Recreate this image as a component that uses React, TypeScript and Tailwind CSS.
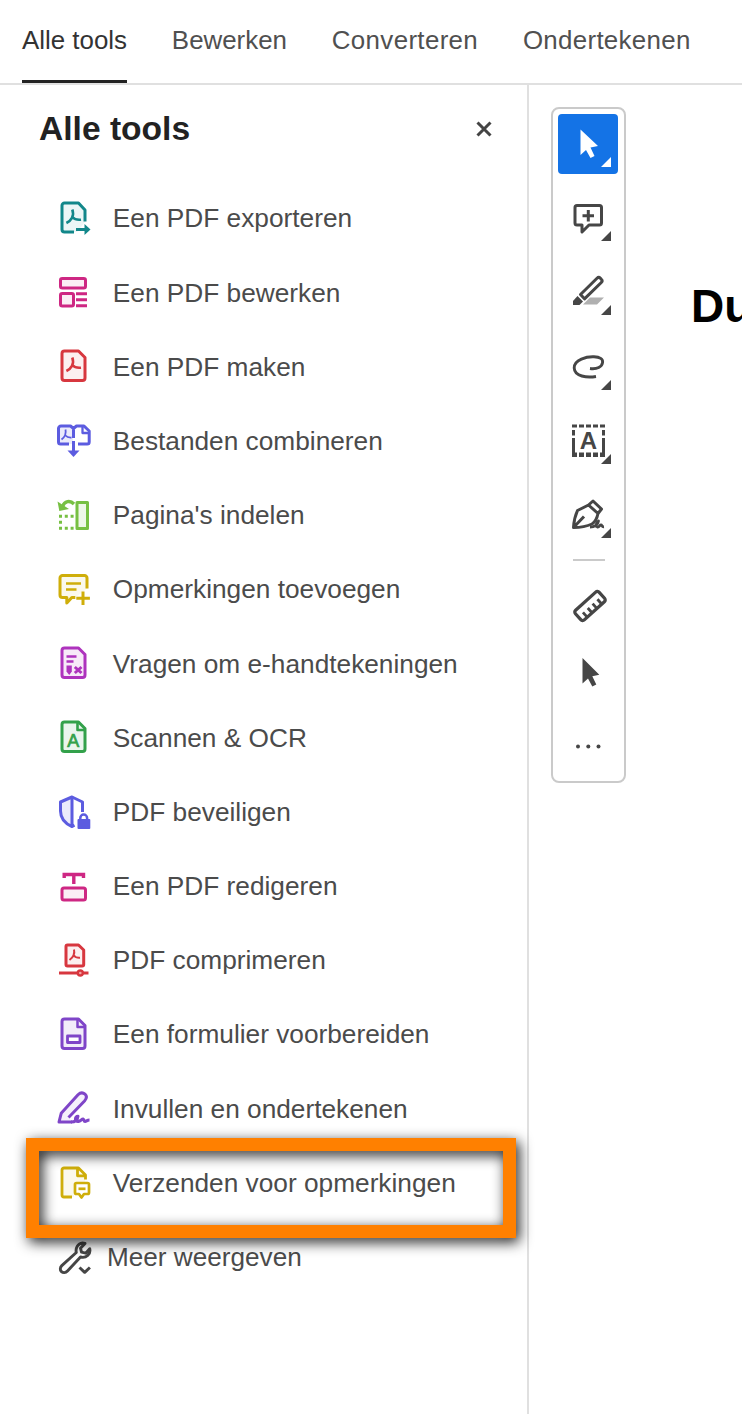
import { useState } from "react";
import type { ReactNode } from "react";

const tabs = [
  { label: "Alle tools", tracking: "tracking-normal" },
  { label: "Bewerken", tracking: "tracking-normal" },
  { label: "Converteren", tracking: "tracking-[0.35px]" },
  { label: "Ondertekenen", tracking: "tracking-[0.3px]" },
];

const DOC = "M8.500 3h14l6.500 6.500V30a2.500 2.500 0 0 1-2.500 2.500h-18A2.500 2.500 0 0 1 6 30V5.500A2.500 2.500 0 0 1 8.500 3z";
const ACROBAT = "M16.300 9.500c1.300 3.500.9 6-.3 8.300-1.200 2.200-2.900 3.900-5.600 5.200M16.300 17c2 2.200 4.700 3.200 8.700 2.700";
const TRIANGLE = "M53 43v10H43z";

function ToolIcon({ color, children }: { color: string; children: ReactNode }) {
  return (
    <svg className={`block h-9 w-9 shrink-0 ${color}`} viewBox="0 0 36 36" fill="none" stroke="currentColor" strokeWidth={3} strokeLinejoin="round">
      {children}
    </svg>
  );
}

const tools: { label: string; icon: ReactNode }[] = [
  {
    label: "Een PDF exporteren",
    icon: (
      <ToolIcon color="text-[#12878a]">
        <path d="M6 3h17l6 7v12l-8 10H6z" fill="currentColor" fillOpacity={0.08} stroke="none" />
        <path d="M29 21.500V10l-6.500-7h-14A2.500 2.500 0 0 0 6 5.500v24A2.500 2.500 0 0 0 8.500 32h9.500" />
        <path d={ACROBAT} strokeWidth={2.600} />
        <path d="M20 29.500h11" />
        <path d="M28.500 24v11l6-5.500z" fill="currentColor" stroke="none" />
      </ToolIcon>
    ),
  },
  {
    label: "Een PDF bewerken",
    icon: (
      <ToolIcon color="text-[#ce2783]">
        <g fill="currentColor" fillOpacity={0.08}>
          <rect x="4.500" y="4.500" width="25" height="9.500" rx="1.800" />
          <rect x="4.500" y="19.500" width="13" height="12.500" rx="1.800" />
        </g>
        <path d="M20 19.700h11M20 25.700h11M20 31.700h11" />
      </ToolIcon>
    ),
  },
  {
    label: "Een PDF maken",
    icon: (
      <ToolIcon color="text-[#d7373f]">
        <path d={DOC} fill="currentColor" fillOpacity={0.08} />
        <path d={ACROBAT} strokeWidth={2.600} />
      </ToolIcon>
    ),
  },
  {
    label: "Bestanden combineren",
    icon: (
      <ToolIcon color="text-[#5c5ce0]">
        <path d="M3 4h14v17H3z" fill="currentColor" fillOpacity={0.12} stroke="none" />
        <path d="M13 21h-8.500a2 2 0 0 1-2-2V5.500a2.500 2.500 0 0 1 2.500-2.500h9.500l3 2.500 3-2.500H28l5.200 5v11a2 2 0 0 1-2 2H22M17.500 5v10" />
        <path d="M26.500 3.500V10h6.500" strokeWidth={2.300} />
        <path d="M9.500 6.500c.8 4-.5 7.500-4 10M9.500 12.500c1.500 1.800 3 2.200 6 2" strokeWidth={1.800} />
        <path d="M17.500 18v11" />
        <path d="M11.500 27.500h12l-6 6.500z" fill="currentColor" stroke="none" />
      </ToolIcon>
    ),
  },
  {
    label: "Pagina's indelen",
    icon: (
      <ToolIcon color="text-[#77c043]">
        <rect x="21" y="5.500" width="10.500" height="26" fill="currentColor" fillOpacity={0.12} />
        <path d="M18 7C14 3 8.500 4 6.500 9.500" strokeWidth={3.400} />
        <path d="M1.500 4.500 3.300 14l9.700-2z" fill="currentColor" stroke="none" />
        <path d="M3 19.300h16M3 25.300h3M3 31.300h16" strokeDasharray="3 2.800" />
      </ToolIcon>
    ),
  },
  {
    label: "Opmerkingen toevoegen",
    icon: (
      <ToolIcon color="text-[#cfae0a]">
        <path d="M31 17.500V7a2.500 2.500 0 0 0-2.500-2.500h-22A2.500 2.500 0 0 0 4 7v17a2.500 2.500 0 0 0 2.500 2.500h4.300V32l5-5.500h3.500" fill="currentColor" fillOpacity={0.08} />
        <path d="M10 12.500h15M10 18.500h10.500" strokeWidth={2.500} />
        <path d="M27 20.500V34M20.300 27.300h13.600" />
      </ToolIcon>
    ),
  },
  {
    label: "Vragen om e-handtekeningen",
    icon: (
      <ToolIcon color="text-[#ae33bd]">
        <path d={DOC} fill="currentColor" fillOpacity={0.1} />
        <path d="M10.500 11.500h10M10.500 16.500h7" strokeWidth={2.500} />
        <path d="M10.500 20.500h5.300v6l-2.600 3.500-2.700-3.500z" fill="currentColor" stroke="none" />
        <path d="m18.800 22 6.700 6M25.500 22l-6.700 6" strokeWidth={3} />
      </ToolIcon>
    ),
  },
  {
    label: "Scannen & OCR",
    icon: (
      <ToolIcon color="text-[#33a14b]">
        <path d={DOC} fill="currentColor" fillOpacity={0.1} />
        <path d="M21.500 3v8H29" strokeWidth={2.600} />
        <text x="17.300" y="27.800" textAnchor="middle" fontFamily="Liberation Sans, sans-serif" fontSize="18" fill="currentColor" strokeWidth="0.700">A</text>
      </ToolIcon>
    ),
  },
  {
    label: "PDF beveiligen",
    icon: (
      <ToolIcon color="text-[#5c5ce0]">
        <path d="M16 3 4.500 8v9c0 7 4.500 12.500 11.500 15.500z" fill="currentColor" fillOpacity={0.12} />
        <path d="M26.500 18V8L16 3M16 32.500l2.500-1.300" />
        <path d="M24.300 26v-2a3.400 3.400 0 0 1 6.800 0v2" strokeWidth={2.500} />
        <rect x="21.500" y="25" width="12.800" height="10" rx="1" fill="currentColor" stroke="none" />
      </ToolIcon>
    ),
  },
  {
    label: "Een PDF redigeren",
    icon: (
      <ToolIcon color="text-[#ce2783]">
        <path d="M8.200 10V6.500h19.300V10M17.800 6.500V16" strokeWidth={3.400} strokeLinejoin="miter" />
        <rect x="6" y="20" width="23.500" height="12" rx="2" fill="currentColor" fillOpacity={0.08} />
      </ToolIcon>
    ),
  },
  {
    label: "PDF comprimeren",
    icon: (
      <ToolIcon color="text-[#d7373f]">
        <path d="M11.500 3h11l5.200 5v14.500a1.500 1.500 0 0 1-1.500 1.500H11.500a1.500 1.500 0 0 1-1.500-1.500v-18A1.500 1.500 0 0 1 11.500 3z" fill="currentColor" fillOpacity={0.08} />
        <path d="M18 7.500c1 4.500-1 8-4.500 10.500M18 13.500c1.300 2 3 2.500 6 2.300" strokeWidth={2} />
        <path d="M3 31h29.500" />
        <circle cx="24.300" cy="31" r="2.500" fill="#f4a3a6" strokeWidth={2.400} />
      </ToolIcon>
    ),
  },
  {
    label: "Een formulier voorbereiden",
    icon: (
      <ToolIcon color="text-[#7f45c8]">
        <path d={DOC} fill="currentColor" fillOpacity={0.1} />
        <path d="M21.500 3v8H29" strokeWidth={2.500} />
        <rect x="11.500" y="20" width="12.500" height="6.500" fill="#fff" strokeWidth={2.800} />
      </ToolIcon>
    ),
  },
  {
    label: "Invullen en ondertekenen",
    icon: (
      <ToolIcon color="text-[#7f45c8]">
        <path d="M16 32H3l2.200-8.700L22 4.800c2.500-2.500 5-2.400 7-.6s1.800 4.200-.5 6.800L12.500 27.500" fill="currentColor" fillOpacity={0.08} />
        <path d="M15 32c4 0 6.500-2 7-5.800-3-.2-4 5.800.5 5.300 2.800-.5 3-2.500 4.500-2.500 1.500.5.5 2.500 2 2.500 1.500-.1 2-1.500 4.500-1.500" strokeWidth={3} />
      </ToolIcon>
    ),
  },
  {
    label: "Verzenden voor opmerkingen",
    icon: (
      <ToolIcon color="text-[#cfae0a]">
        <path d="M6 3h16l7 7v8H18v14H6z" fill="currentColor" fillOpacity={0.08} stroke="none" />
        <path d="M29.500 14.500V10l-7-7H8a2 2 0 0 0-2 2v25a2 2 0 0 0 2 2h8M21.500 3.500v7.300h7" strokeWidth={2.800} />
        <path d="M20.500 18h11a1.500 1.500 0 0 1 1.500 1.500v8a1.500 1.500 0 0 1-1.500 1.500H28l-2.500 3.500L23 29h-2.500a1.500 1.500 0 0 1-1.500-1.500v-8a1.500 1.500 0 0 1 1.500-1.500z" fill="#fff" strokeWidth={2.700} />
        <path d="M22.500 23.800h7" strokeWidth={2.700} />
      </ToolIcon>
    ),
  },
];

function TopBar({ active, onSelect }: { active: string; onSelect: (tab: string) => void }) {
  return (
    <header className="flex h-[85px] shrink-0 gap-[44.800px] border-b-2 border-[#e0e0e0] pl-[22px]">
      {tabs.map(({ label, tracking }) => (
        <button
          key={label}
          type="button"
          onClick={() => onSelect(label)}
          className={`h-[83px] whitespace-nowrap border-b-[3px] text-[25.900px] leading-[81px] ${tracking} ${
            label === active ? "border-[#222] text-[#333]" : "border-transparent text-[#505050]"
          }`}
        >
          {label}
        </button>
      ))}
    </header>
  );
}

function ToolsPanel() {
  return (
    <aside className="w-[529px] shrink-0 border-r-2 border-[#e0e0e0]">
      <div className="flex h-[88px] items-center justify-between pr-[35px] pl-[39px]">
        <h2 className="text-[33.600px] font-bold text-[#222]">Alle tools</h2>
        <svg className="h-[16px] w-[16px] text-[#444]" viewBox="0 0 16 16" fill="none" stroke="currentColor" strokeWidth={3}>
          <path d="m1.500 1.500 13 13m0-13-13 13" />
        </svg>
      </div>
      <ul className="pt-[8px]">
        {tools.map((tool, i) => (
          <li key={tool.label} className="relative flex h-[74.200px] items-center gap-[20.800px] pl-14">
            {tool.icon}
            <span className="pt-[2px] text-[26.250px] whitespace-nowrap text-[#4b4b4b]">{tool.label}</span>
            {i === tools.length - 1 && (
              <div className="absolute top-[-7.500px] left-[26px] h-[100px] w-[490px] border-[13px] border-[#ff8000] drop-shadow-[3px_4px_7px_rgba(0,0,0,0.9)]" />
            )}
          </li>
        ))}
        <li className="flex h-[74.200px] items-center gap-[15px] pl-14">
          <ToolIcon color="text-[#464646]">
            <path d="M20.300 13.500c-1-4.500 1.500-9 6.200-9.500 1 0 1.700.1 2.500.4l-4.500 4.800 1 4 4.200 1 4-4.500c1.300 5.500-3.500 9.800-9.200 8.300L11.500 32c-2 2.200-4.500 2-6 .6s-1.700-4 .3-6z" strokeWidth={2.900} />
            <path d="m23.500 28.500 5.200 4.800 5.200-4.800" strokeWidth={3} />
          </ToolIcon>
          <span className="pt-[2px] text-[26.150px] whitespace-nowrap text-[#4b4b4b]">Meer weergeven</span>
        </li>
      </ul>
    </aside>
  );
}

function BarButton({ active, menu, children }: { active?: boolean; menu?: boolean; children: ReactNode }) {
  return (
    <button type="button" className={`block h-[60px] w-[60px] shrink-0 rounded ${active ? "bg-[#1473e6] text-white" : "text-[#464646]"}`}>
      <svg className="block h-[60px] w-[60px]" viewBox="0 0 60 60" fill="none" stroke="currentColor" strokeWidth={3} strokeLinejoin="round">
        {children}
        {menu && <path d={TRIANGLE} fill="currentColor" stroke="none" />}
      </svg>
    </button>
  );
}

function QuickBar() {
  return (
    <div className="h-[676px] w-[75px] shrink-0 rounded-lg border-2 border-[#cacaca] py-[5px] pl-[5px]">
      <div className="flex flex-col gap-[14.200px]">
        <BarButton active menu>
          <path d="M22.500 15.500V41l5.500-5 4.500 8 4-2-4-8.500 7.500-1.500z" fill="currentColor" stroke="none" />
        </BarButton>
        <BarButton menu>
          <path d="M19 17.500h22.500a2 2 0 0 1 2 2V35a2 2 0 0 1-2 2H31l-7 7v-7h-5a2 2 0 0 1-2-2V19.500a2 2 0 0 1 2-2z" />
          <path d="M30.300 22v11.500M24.500 27.700h11.500" />
        </BarButton>
        <BarButton menu>
          <path d="M32 35.500h14l-7 7H25z" fill="#b0b0b0" stroke="none" />
          <path d="M22.500 32.500 39 16.200c1-1 2.400-1 3.400 0l.9 1c1 1 1 2.300 0 3.300L26.500 36.800z" />
          <path d="m19.500 34 5.500 5.500-3.500 3.500h-6.500v-4z" fill="currentColor" stroke="none" />
        </BarButton>
        <BarButton menu>
          <path d="M38 39.500c-9 1.500-21.500 0-21.800-8.500C16 22.500 29 19.500 36 19.800c6 .2 9 2.200 8.600 5.500-.6 4.500-5.500 7.200-12.600 6.200" strokeWidth={2.900} />
        </BarButton>
        <BarButton menu>
          <path d="M14 15h33" strokeDasharray="5 2" />
          <path d="M14 43.800h33" strokeWidth={4.500} strokeDasharray="5 2" />
          <path d="M15.500 19v5.500M45.500 19v5.500M15.500 27v15M45.500 27v15" />
          <text x="30.500" y="38" textAnchor="middle" fontFamily="Liberation Sans, sans-serif" fontWeight="bold" fontSize="24" fill="currentColor" stroke="none">A</text>
        </BarButton>
        <BarButton menu>
          <path d="M15.500 42.500c.3-6 1.500-11.500 4-17l11-5.500 9.500 8.500c-1 5-3 8.500-6 10.500-5.500 2.500-11 3.500-18.500 3.500zm0 0 10.500-11M30.500 20l4.500-4 8.500 8-3.500 4.500" />
          <path d="M32 42c4.500 0 8-2.500 8.500-6-2.500 1.500-3 5-1 6 2 .3 2-2 3.500-2 1.200 0 .5 2 3 1.800" strokeWidth={2.800} />
        </BarButton>
      </div>
      <div className="mt-[14px] mb-[15px] ml-[15px] h-[2px] w-[32px] bg-[#cacaca]" />
      <BarButton>
        <g transform="rotate(-42 32 30)">
          <rect x="16" y="23.500" width="32" height="13" rx="2.500" strokeWidth={3.300} />
          <path d="M22.500 36v-6M29 36v-6M35.500 36v-6M42 36v-6" strokeWidth={2.800} />
        </g>
      </BarButton>
      <div className="mt-[6px]">
        <BarButton>
          <path d="M24.500 16v25.500l5.500-5 4.300 8 4-2-4-8.300 7-1.500z" fill="currentColor" stroke="none" />
        </BarButton>
      </div>
      <div className="mt-[14px]">
        <BarButton>
          <g fill="currentColor" stroke="none">
            <circle cx="20" cy="30.500" r="2" />
            <circle cx="30.300" cy="30.500" r="2" />
            <circle cx="40.500" cy="30.500" r="2" />
          </g>
        </BarButton>
      </div>
    </div>
  );
}

export default function App() {
  const [active, setActive] = useState(tabs[0].label);

  return (
    <div className="flex h-[1414px] w-[742px] flex-col overflow-hidden bg-white font-['Liberation_Sans',Arial,sans-serif]">
      <TopBar active={active} onSelect={setActive} />
      <div className="flex min-h-0 flex-1">
        <ToolsPanel />
        <main className="flex min-w-0 flex-1 overflow-hidden pt-[22px] pl-[22px]">
          <QuickBar />
          <p className="mt-[172px] ml-[65px] text-[46px] leading-[54px] font-bold whitespace-nowrap text-black">Du</p>
        </main>
      </div>
    </div>
  );
}
